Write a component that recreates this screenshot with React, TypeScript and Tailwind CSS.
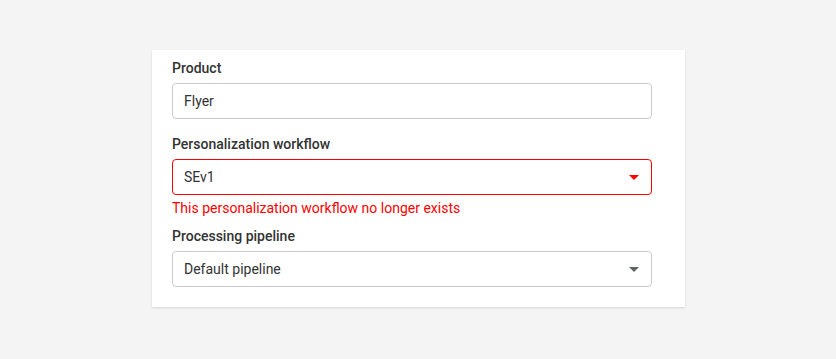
import React from "react";

function Caret({ color }: { color: string }) {
  return (
    <svg width="10" height="5" viewBox="0 0 10 5" className="shrink-0">
      <path d="M0 0 L10 0 L5 5 Z" fill={color} />
    </svg>
  );
}

export default function App() {
  return (
    <div
      className="w-[836px] h-[359px] bg-[#f4f4f4] pt-[50px] pl-[152px]"
      style={{ fontFamily: "Roboto, 'Liberation Sans', sans-serif" }}
    >
      <div className="w-[533px] bg-white shadow-[0_1px_2px_rgba(0,0,0,0.12)] pl-5 pr-[33px] pt-2 pb-5 flex flex-col">
        <label className="text-[14px] leading-5 font-medium text-[#333]">Product</label>
        <div className="mt-[5px] h-9 border border-[#cccccc] rounded-[4px] flex items-center pl-[11px] pr-3 text-[14px] text-[#333]">
          Flyer
        </div>

        <label className="mt-[15px] text-[14px] leading-5 font-medium text-[#333]">
          Personalization workflow
        </label>
        <div className="mt-[5px] h-9 border border-[#ff0000] rounded-[4px] flex items-center justify-between pl-[11px] pr-[12px] text-[14px] text-[#333]">
          <span>SEv1</span>
          <Caret color="#ff0000" />
        </div>
        <div className="mt-[3px] text-[14px] leading-5 text-[#ff0000]">
          This personalization workflow no longer exists
        </div>

        <label className="mt-[8px] text-[14px] leading-5 font-medium text-[#333]">
          Processing pipeline
        </label>
        <div className="mt-[5px] h-9 border border-[#cccccc] rounded-[4px] flex items-center justify-between pl-[11px] pr-[12px] text-[14px] text-[#333]">
          <span>Default pipeline</span>
          <Caret color="#5f6368" />
        </div>
      </div>
    </div>
  );
}
